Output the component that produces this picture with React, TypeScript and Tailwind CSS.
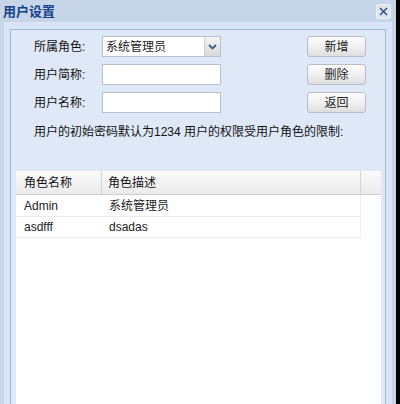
const font = "font-['Liberation_Sans','Noto_Sans_CJK_SC',sans-serif]";

function FormButton({ label }: { label: string }) {
  return (
    <div className="w-[59px] h-[21px] rounded-[3px] border border-[#b9bec6] bg-gradient-to-b from-[#fbfbfb] via-[#f1f1f1] to-[#dedede] flex items-center justify-center text-[12px] text-[#222]">
      {label}
    </div>
  );
}

function TextBox({ value }: { value?: string }) {
  return (
    <div className="w-[119px] h-[21px] border border-[#b5c0d0] bg-white flex items-center pl-[3px] text-[12px] text-[#222]">
      {value}
    </div>
  );
}

function Row({ label, children, button }: { label: string; children: React.ReactNode; button: string }) {
  return (
    <div className="flex items-center h-[21px] pl-[23px]">
      <div className="w-[68px] text-[12px] text-[#111]">{label}</div>
      {children}
      <div className="ml-[86px]">
        <FormButton label={button} />
      </div>
    </div>
  );
}

const roles = [
  { name: 'Admin', desc: '系统管理员', h: 'h-[22px]' },
  { name: 'asdfff', desc: 'dsadas', h: 'h-[21px]' },
];

export default function App() {
  return (
    <div className={`w-[400px] h-[404px] bg-black overflow-hidden ${font}`}>
      <div className="w-[396px] h-[404px] bg-[#c6d5e8] flex flex-col">
        {/* Title bar */}
        <div className="h-[22px] flex items-center justify-between pl-[3px] pr-[5px] shrink-0">
          <span className="text-[13px] font-bold text-[#15428b] leading-none">用户设置</span>
          <div className="w-[15px] h-[15px] border border-[#eef3fa] rounded-[2px] bg-[#dbe5f3] flex items-center justify-center">
            <svg width="9" height="9" viewBox="0 0 9 9">
              <path d="M1 1 L8 8 M8 1 L1 8" stroke="#264a7c" strokeWidth="1.4" />
            </svg>
          </div>
        </div>

        {/* Body frame */}
        <div className="flex-1 px-[4px] flex flex-col">
          <div className="flex-1 bg-[#d9e5f7] px-[6px] pt-[7px] flex flex-col">
            <div className="flex-1 border border-[#9fb8da] border-b-0 bg-[#dfe8f6] pt-[6px] pl-[5px] pr-[4px] flex flex-col">
              {/* Form */}
              <div className="flex flex-col gap-[7px] -ml-[5px]">
                <Row label="所属角色:" button="新增">
                  <div className="w-[119px] h-[21px] border border-[#b5c0d0] bg-white flex items-center">
                    <span className="flex-1 pl-[3px] text-[12px] text-[#222]">系统管理员</span>
                    <div className="w-[16px] h-full border-l border-[#c9cfd8] bg-gradient-to-b from-[#f4f4f4] to-[#d9d9d9] flex items-center justify-center">
                      <svg width="9" height="6" viewBox="0 0 9 6">
                        <path d="M1 1 L4.5 4.5 L8 1" stroke="#3b5b8c" strokeWidth="1.8" fill="none" />
                      </svg>
                    </div>
                  </div>
                </Row>
                <Row label="用户简称:" button="删除">
                  <TextBox />
                </Row>
                <Row label="用户名称:" button="返回">
                  <TextBox />
                </Row>
              </div>

              <div className="mt-[11px] pl-[18px] text-[12px] leading-[16px] text-[#111]">
                用户的初始密码默认为1234 用户的权限受用户角色的限制:
              </div>

              {/* Grid */}
              <div className="mt-[31px] flex-1 bg-white flex flex-col">
                <div className="h-[24px] flex border-b border-[#d0d0d0] bg-gradient-to-b from-[#fbfbfb] to-[#ebebeb] text-[12px] text-[#111]">
                  <div className="w-[86px] border-r border-[#d4d4d4] pl-[8px] flex items-center">角色名称</div>
                  <div className="w-[259px] border-r border-[#d4d4d4] pl-[6px] flex items-center">角色描述</div>
                  <div className="flex-1" />
                </div>
                {roles.map((r, i) => (
                  <div key={i} className={`flex ${r.h} text-[12px] text-[#222]`}>
                    <div className="w-[345px] flex border-b border-[#ececec] border-r border-r-[#f0f0f0]">
                      <div className="w-[86px] pl-[8px] flex items-center">{r.name}</div>
                      <div className="flex-1 pl-[7px] flex items-center">{r.desc}</div>
                    </div>
                  </div>
                ))}
              </div>
            </div>
          </div>
        </div>
      </div>
    </div>
  );
}
